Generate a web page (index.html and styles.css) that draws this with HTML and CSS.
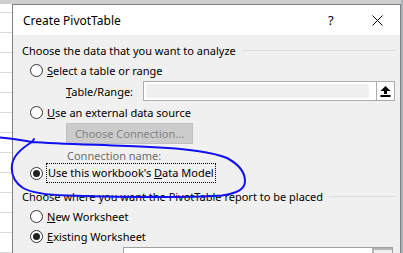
FILE: index.html
```html
<!DOCTYPE html>
<html lang="en">
<head>
    <meta charset="UTF-8">
    <title>Create PivotTable</title>
    <link rel="stylesheet" href="styles.css">
</head>
<body>
<div class="desk">
    <div class="dialog">
        <div class="titlebar">
            <span class="title">Create PivotTable</span>
            <span class="help">?</span>
            <span class="close">
                <svg width="11" height="11" viewBox="0 0 11 11"><path d="M0.5 0.5 L10.5 10.5 M10.5 0.5 L0.5 10.5" stroke="#000" stroke-width="1" fill="none"/></svg>
            </span>
        </div>
        <div class="body">
            <div class="group-head"><span>Choose the data that you want to analyze</span><span class="rule"></span></div>

            <div class="opt"><span class="radio"></span><span class="opt-text"><u>S</u>elect a table or range</span></div>

            <div class="field-row">
                <span class="label"><u>T</u>able/Range:</span>
                <div class="ref-box disabled">
                    <span class="ref-input"></span>
                    <span class="ref-btn">
                        <svg width="11" height="11" viewBox="0 0 11 11"><path d="M5.5 0 L0.5 5 L4 5 L4 8 L7 8 L7 5 L10.5 5 Z M0.5 9 H10.5 V11 H0.5 Z" fill="#000"/></svg>
                    </span>
                </div>
            </div>

            <div class="opt"><span class="radio"></span><span class="opt-text"><u>U</u>se an external data source</span></div>

            <div class="btn-row"><button class="btn" disabled>Choose Connection...</button></div>

            <div class="conn-name">Connection name:</div>

            <div class="opt"><span class="radio checked"></span><span class="opt-text focus">Use this workbook's <u>D</u>ata Model</span></div>

            <div class="group-head second"><span>Choose where you want the PivotTable report to be placed</span><span class="rule"></span></div>

            <div class="opt"><span class="radio"></span><span class="opt-text"><u>N</u>ew Worksheet</span></div>
            <div class="opt"><span class="radio checked"></span><span class="opt-text"><u>E</u>xisting Worksheet</span></div>

            <div class="loc-row">
                <div class="ref-box loc">
                    <span class="ref-input"></span>
                    <span class="ref-btn"></span>
                </div>
            </div>
        </div>
    </div>

    <!-- pen annotation drawn over the dialog -->
    <svg class="ink" width="403" height="253" viewBox="0 0 403 253">
        <path d="M0 137.5 C12 138.5 24 140.5 32 142 C60 144 110 145 150 147 C185 148.5 210 151 227 158 C238 164 245 172 245 181 C245 189 238 193 222 195.5 C190 197.5 120 197 67 195.5 C48 195 32 193 23 188 C14 182 11 173 12 165 C13 156 22 148 32 142 L34 139"
              fill="none" stroke="#1010f0" stroke-width="2" stroke-linecap="round" stroke-linejoin="round"/>
    </svg>
</div>
</body>
</html>
```

FILE: styles.css
```css
body {
    margin: 0;
    font-family: "Noto Sans", "Liberation Sans", sans-serif;
    font-size: 11px;
    color: #000;
}
.desk {
    position: relative;
    width: 403px;
    height: 253px;
    overflow: hidden;
    box-sizing: border-box;
    padding: 4px 0 0 12px;
    background-color: #fff;
    background-image:
        linear-gradient(#cfcfcf, #cfcfcf),
        repeating-linear-gradient(to bottom, transparent 0, transparent 12px, #dadada 12px, #dadada 13px, transparent 13px, transparent 20px);
    background-size: 403px 4px, 403px 253px;
    background-repeat: no-repeat;
}
.desk::after {
    content: "";
    position: absolute;
    top: 0;
    right: 0;
    width: 2px;
    height: 253px;
    background: #a9b1bc;
}
.dialog {
    width: 389px;
    height: 270px;
    box-sizing: border-box;
    border: 1px solid #7f7f7f;
    background: #f0f0f0;
}
.titlebar {
    height: 30px;
    background: #fff;
    display: flex;
    align-items: center;
    padding-left: 10px;
    font-size: 12px;
}
.title {
    flex: 1;
}
.help {
    width: 10px;
    margin-right: 34px;
    font-size: 13px;
}
.close {
    width: 11px;
    height: 11px;
    margin-right: 17px;
    display: flex;
}
.body {
    display: flex;
    flex-direction: column;
}
.group-head {
    height: 20px;
    margin-top: 5px;
    display: flex;
    align-items: center;
    padding-left: 9px;
    padding-right: 5px;
}
.group-head.second {
    margin-top: 3px;
}
.rule {
    flex: 1;
    height: 1px;
    margin-left: 6px;
    margin-top: 1px;
    background: #dcdcdc;
}
.opt {
    height: 20px;
    display: flex;
    align-items: center;
    padding-left: 17px;
}
.radio {
    width: 13px;
    height: 13px;
    box-sizing: border-box;
    border: 1px solid #333;
    border-radius: 50%;
    background: #fff;
    display: flex;
    align-items: center;
    justify-content: center;
}
.radio.checked::after {
    content: "";
    width: 7px;
    height: 7px;
    border-radius: 50%;
    background: #222;
}
.opt-text {
    margin-left: 4px;
}
.focus {
    margin-left: 3px;
    padding: 0 1px;
    height: 18px;
    line-height: 18px;
    border: 1px dotted #000;
}
.field-row {
    height: 22px;
    display: flex;
    align-items: center;
    padding-left: 53px;
}
.label {
    width: 77px;
}
.ref-box {
    width: 252px;
    height: 20px;
    box-sizing: border-box;
    border: 1px solid #adadad;
    background: #fff;
    display: flex;
    padding: 2px 0 2px 2px;
}
.ref-box.disabled .ref-input {
    background: #f0f0f0;
    margin-right: 7px;
}
.ref-input {
    flex: 1;
}
.ref-btn {
    width: 17px;
    margin-top: -2px;
    margin-bottom: -2px;
    border-left: 1px solid #adadad;
    background: #fdfdfd;
    display: flex;
    align-items: center;
    justify-content: center;
}
.btn-row {
    height: 22px;
    padding-left: 53px;
}
.btn {
    margin-top: 1px;
    width: 127px;
    height: 21px;
    padding: 0;
    font-family: inherit;
    font-size: 11px;
    color: #838383;
    background: #cccccc;
    border: 1px solid #bfbfbf;
}
.conn-name {
    height: 19px;
    box-sizing: border-box;
    padding-top: 5px;
    padding-left: 54px;
    line-height: 14px;
    color: #6d6d6d;
}
.loc-row {
    margin-top: 1px;
    padding-left: 110px;
}
.ref-box.loc {
    width: 270px;
    border-color: #a0a0a0;
    padding: 0;
}
.ref-box.loc .ref-btn {
    width: 18px;
    margin: 0;
    border: 2px solid #b4b4b4;
    border-right: 0;
    background: #f0f0f0;
}
.ink {
    position: absolute;
    left: 0;
    top: 0;
    pointer-events: none;
}
```
